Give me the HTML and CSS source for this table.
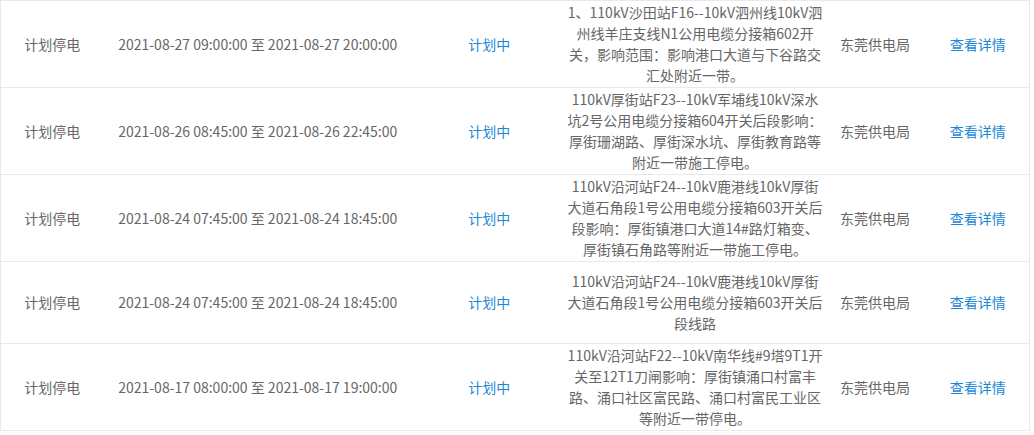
FILE: index.html
```html
<!DOCTYPE html>
<html lang="zh-CN">
<head>
<meta charset="utf-8">
<title>停电信息</title>
<link rel="stylesheet" href="styles.css">
</head>
<body>
<table class="outage-table">
  <colgroup>
    <col class="c-type"><col class="c-time"><col class="c-state"><col class="c-desc"><col class="c-org"><col class="c-act">
  </colgroup>
  <tbody>
    <tr>
      <td>计划停电</td>
      <td>2021-08-27 09:00:00 至 2021-08-27 20:00:00</td>
      <td class="state">计划中</td>
      <td class="desc">1、110kV沙田站F16--10kV泗州线10kV泗州线羊庄支线N1公用电缆分接箱602开关，影响范围：影响港口大道与下谷路交汇处附近一带。</td>
      <td>东莞供电局</td>
      <td><a class="link" href="#">查看详情</a></td>
    </tr>
    <tr>
      <td>计划停电</td>
      <td>2021-08-26 08:45:00 至 2021-08-26 22:45:00</td>
      <td class="state">计划中</td>
      <td class="desc">110kV厚街站F23--10kV军埔线10kV深水坑2号公用电缆分接箱604开关后段影响：厚街珊湖路、厚街深水坑、厚街教育路等附近一带施工停电。</td>
      <td>东莞供电局</td>
      <td><a class="link" href="#">查看详情</a></td>
    </tr>
    <tr>
      <td>计划停电</td>
      <td>2021-08-24 07:45:00 至 2021-08-24 18:45:00</td>
      <td class="state">计划中</td>
      <td class="desc">110kV沿河站F24--10kV鹿港线10kV厚街大道石角段1号公用电缆分接箱603开关后段影响：厚街镇港口大道14#路灯箱变、厚街镇石角路等附近一带施工停电。</td>
      <td>东莞供电局</td>
      <td><a class="link" href="#">查看详情</a></td>
    </tr>
    <tr>
      <td>计划停电</td>
      <td>2021-08-24 07:45:00 至 2021-08-24 18:45:00</td>
      <td class="state">计划中</td>
      <td class="desc">110kV沿河站F24--10kV鹿港线10kV厚街大道石角段1号公用电缆分接箱603开关后段线路</td>
      <td>东莞供电局</td>
      <td><a class="link" href="#">查看详情</a></td>
    </tr>
    <tr>
      <td>计划停电</td>
      <td>2021-08-17 08:00:00 至 2021-08-17 19:00:00</td>
      <td class="state">计划中</td>
      <td class="desc">110kV沿河站F22--10kV南华线#9塔9T1开关至12T1刀闸影响：厚街镇涌口村富丰路、涌口社区富民路、涌口村富民工业区等附近一带停电。</td>
      <td>东莞供电局</td>
      <td><a class="link" href="#">查看详情</a></td>
    </tr>
  </tbody>
</table>
</body>
</html>
```

FILE: styles.css
```css
html, body {
  margin: 0;
  padding: 0;
  background: #fff;
}

body {
  font-family: "Noto Sans CJK SC", "Liberation Sans", sans-serif;
  font-size: 14px;
  color: #666;
}

.outage-table {
  width: 1030px;
  border-collapse: collapse;
  table-layout: fixed;
  border: 1px solid #e6e9ee;
}

.c-type { width: 10%; }
.c-time { width: 30%; }
.c-state { width: 15%; }
.c-desc { width: 25%; }
.c-org { width: 10%; }
.c-act { width: 10%; }

.outage-table td {
  border-top: 1px solid #e6e9ee;
  border-bottom: 1px solid #e6e9ee;
  text-align: center;
  vertical-align: middle;
  padding: 1px 0;
  line-height: 21px;
  height: 79px;
}

.outage-table .state {
  color: #1a88d8;
}

.link {
  color: #1a88d8;
  text-decoration: none;
}
```
